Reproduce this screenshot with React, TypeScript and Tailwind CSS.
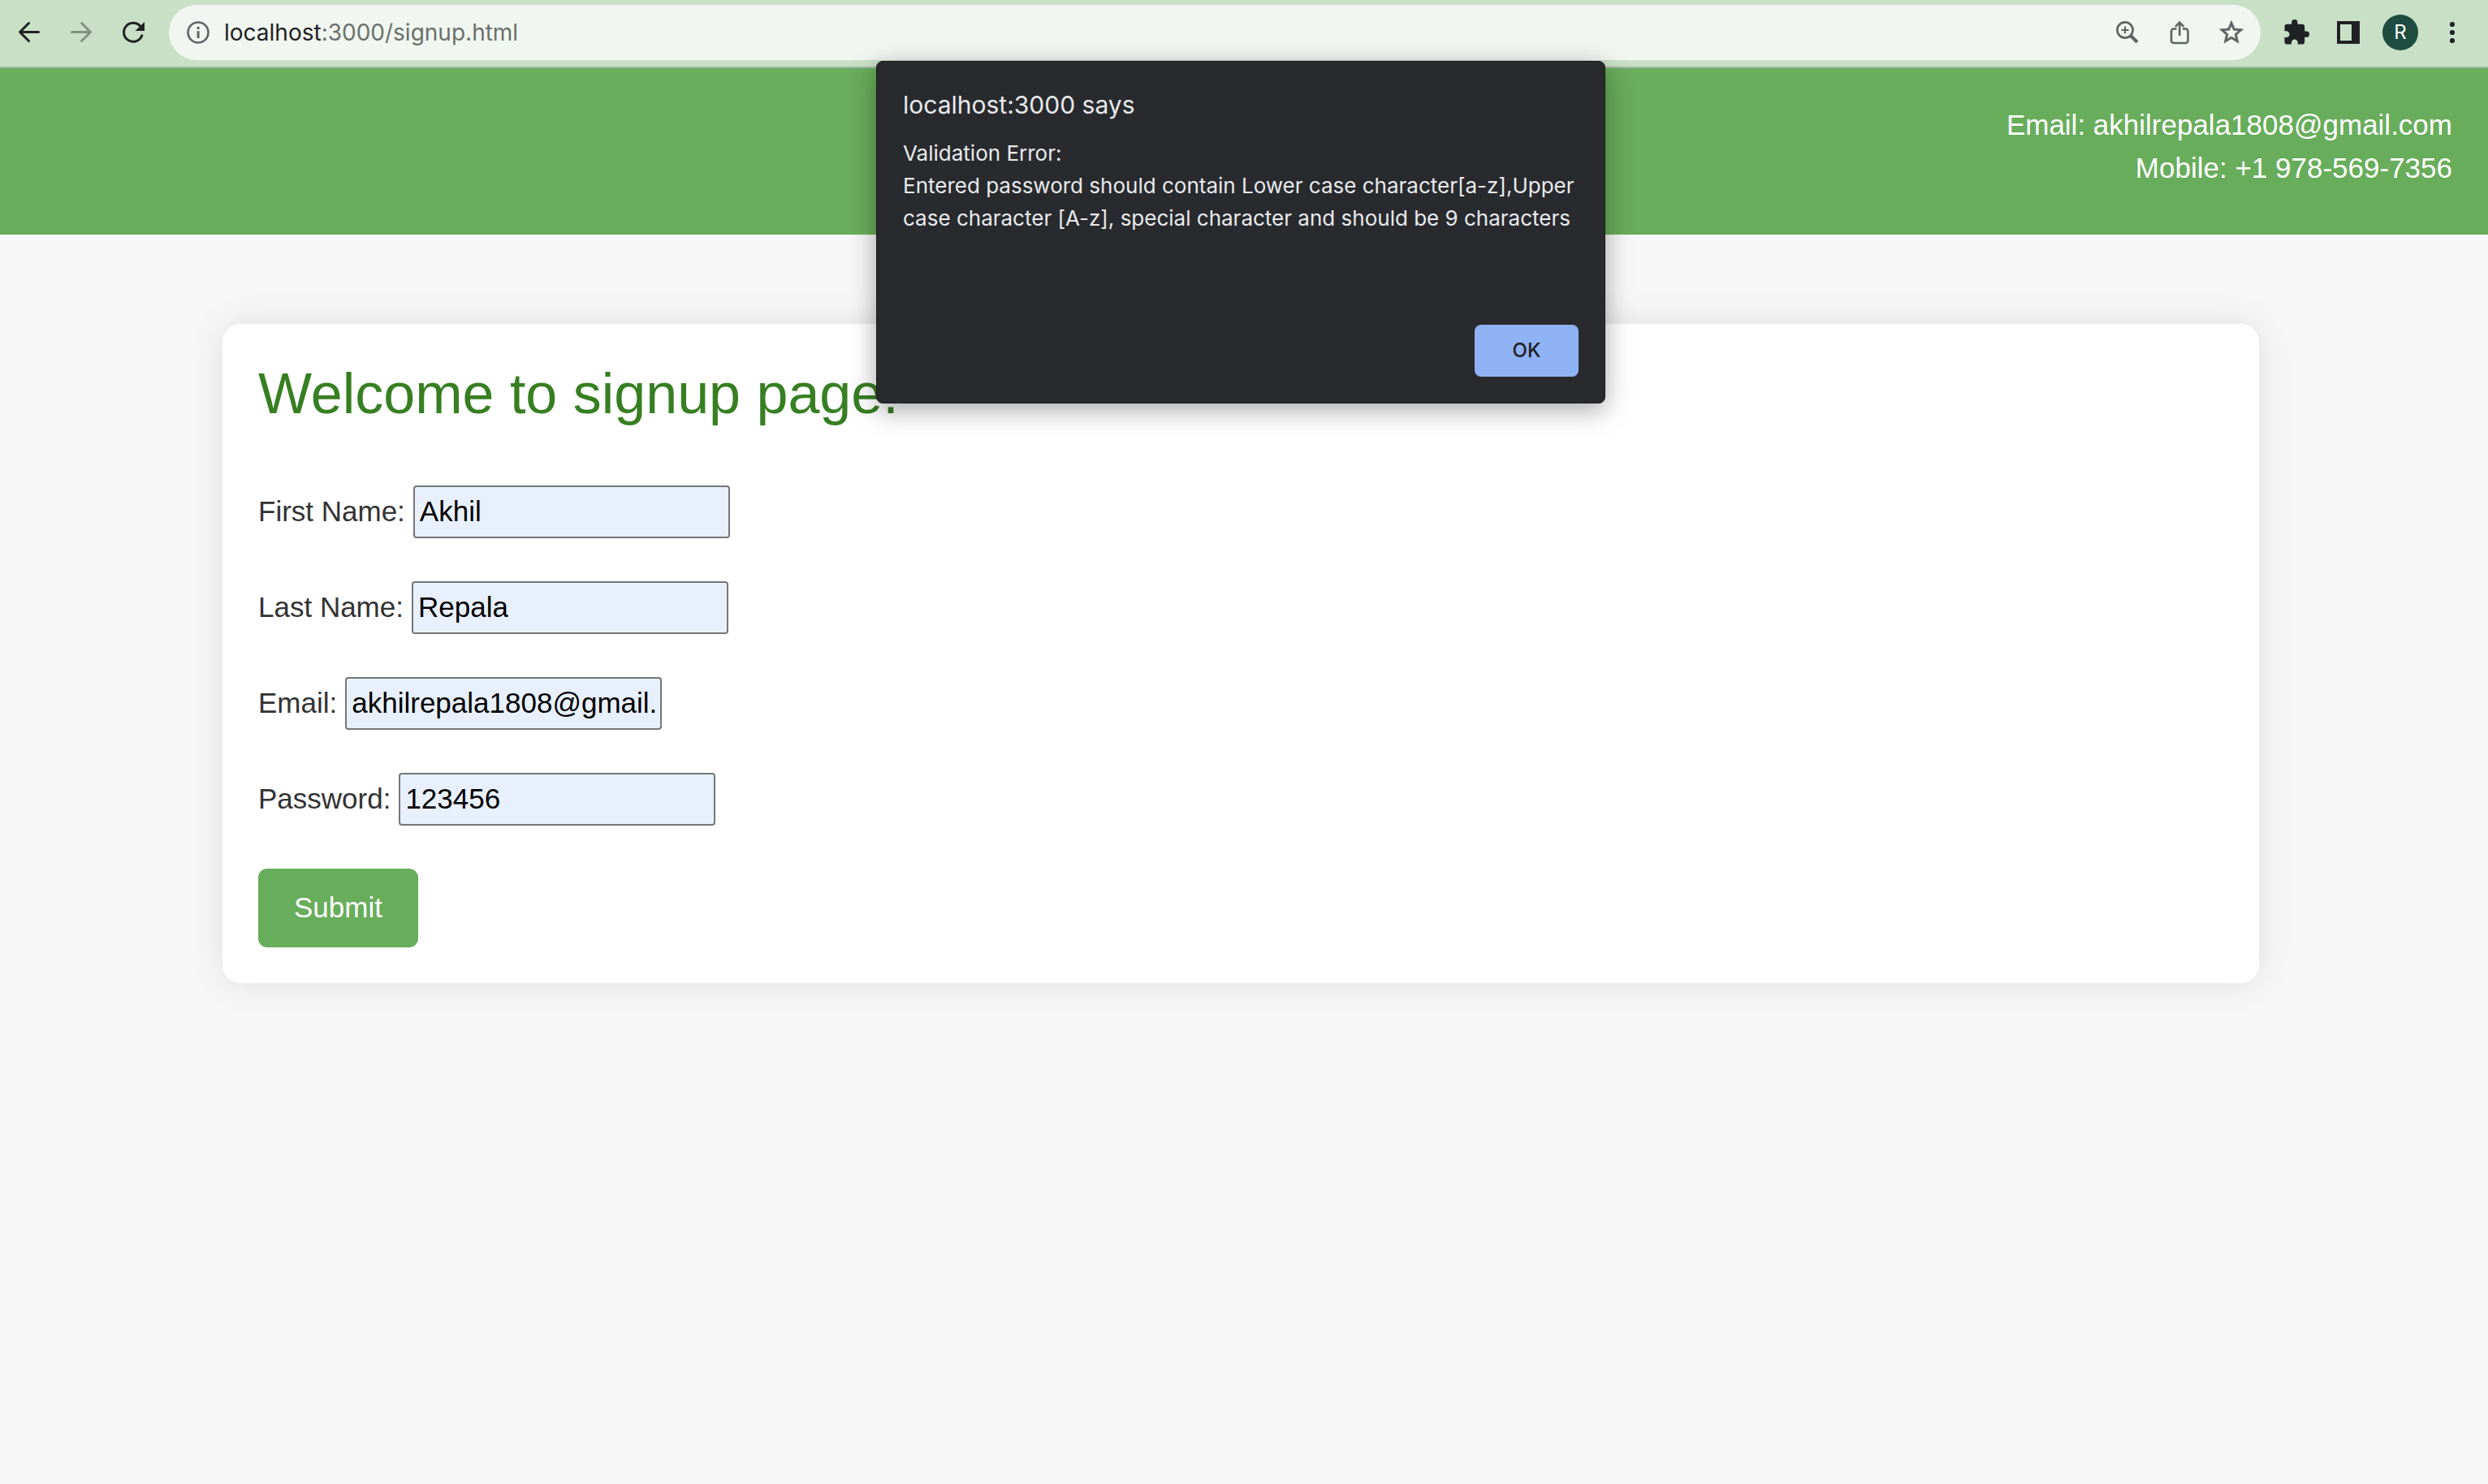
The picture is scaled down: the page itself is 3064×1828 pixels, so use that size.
import React from "react";

const ARIAL = "font-['Liberation_Sans',Arial,sans-serif]";

type FieldProps = { id: string; label: string; type: string; value: string };

function Field({ id, label, type, value }: FieldProps) {
  return (
    <div className="flex h-[65px] items-center gap-[10px]">
      <label htmlFor={id} className="pb-[2px]">{label}</label>
      <input
        id={id}
        type={type}
        defaultValue={value}
        className="h-[65px] w-[390px] rounded-[4px] border-2 border-[#767676] bg-[#e8f0fe] px-[6px] pb-[2px] text-black"
      />
    </div>
  );
}

function IconButton({ label, className, children }: { label: string; className: string; children: React.ReactNode }) {
  return (
    <button type="button" aria-label={label} className={`flex h-16 w-16 items-center justify-center ${className}`}>
      {children}
    </button>
  );
}

function Toolbar() {
  return (
    <div className="flex h-[84px] items-start border-b-2 border-[#a3b9a5] bg-[#c9e0c6] pt-[6px] font-[Inter,sans-serif]">
      <div className="flex h-[68px] w-[208px] shrink-0 items-center pl-1">
        <IconButton label="Back" className="text-[#202124]">
          <svg viewBox="0 0 32 32" className="h-8 w-8" fill="none" stroke="currentColor" strokeWidth="3" strokeLinecap="round" strokeLinejoin="round">
            <path d="M27.5 15.5H4.8M15.5 4.500L4.500 15.500l11 11" />
          </svg>
        </IconButton>
        <IconButton label="Forward" className="text-[#82917f]">
          <svg viewBox="0 0 32 32" className="h-8 w-8" fill="none" stroke="currentColor" strokeWidth="3" strokeLinecap="round" strokeLinejoin="round">
            <path d="M4.500 15.500h22.700M16.500 4.500l11 11-11 11" />
          </svg>
        </IconButton>
        <IconButton label="Reload" className="text-[#202124]">
          <svg viewBox="0 0 32 32" className="h-8 w-8">
            <path d="M26.800 19.800A11.500 11.500 0 1 1 24.500 8" fill="none" stroke="currentColor" strokeWidth="3" strokeLinecap="round" />
            <path d="M30 3v11H18.500z" fill="currentColor" />
          </svg>
        </IconButton>
      </div>
      <div className="flex h-[68px] grow items-center rounded-full bg-[#f1f7f0] pr-1">
        <svg viewBox="0 0 28 28" className="ml-[22px] mr-[18px] h-7 w-7 shrink-0 text-[#5f6368]">
          <circle cx="14" cy="14" r="12.5" fill="none" stroke="currentColor" strokeWidth="2.6" />
          <path d="M12.6 7h3v3h-3zM12.6 12.2h3V21h-3z" fill="currentColor" />
        </svg>
        <div className="grow text-[28px] leading-[34px] text-[#6a706c]">
          <span className="text-[#202124]">localhost</span>:3000/signup.html
        </div>
        <IconButton label="Zoom" className="text-[#5f6363]">
          <svg viewBox="0 0 32 32" className="h-8 w-8" fill="none" stroke="currentColor">
            <circle cx="13" cy="13" r="9.6" strokeWidth="2.6" />
            <path d="M13 8.500v9M8.500 13h9" strokeWidth="2" />
            <path d="M20 20l8 8" strokeWidth="4" />
          </svg>
        </IconButton>
        <IconButton label="Share" className="text-[#5f6363]">
          <svg viewBox="0 0 32 32" className="h-8 w-8" fill="none" stroke="currentColor" strokeWidth="2.6">
            <path d="M12.500 11.500H9a3 3 0 0 0-3 3V26a3 3 0 0 0 3 3h14.500a3 3 0 0 0 3-3V14.500a3 3 0 0 0-3-3H20M16.200 20V4M11 8.800l5.200-5.200 5.200 5.200" />
          </svg>
        </IconButton>
        <IconButton label="Bookmark" className="text-[#5f6363]">
          <svg viewBox="1 1 22 22" className="h-8 w-8" fill="currentColor" stroke="currentColor" strokeWidth="0.5">
            <path d="M22 9.240l-7.190-.620L12 2 9.190 8.630 2 9.240l5.460 4.730L5.820 21 12 17.270 18.180 21l-1.630-7.030L22 9.240zM12 15.400l-3.760 2.270 1-4.280-3.320-2.880 4.380-.380L12 6.100l1.710 4.040 4.380.380-3.320 2.880 1 4.280L12 15.400z" />
          </svg>
        </IconButton>
      </div>
      <div className="flex h-[68px] shrink-0 items-center pl-3 pr-3">
        <IconButton label="Extensions" className="text-[#202124]">
          <svg viewBox="1 1 22 22" className="h-8 w-8" fill="currentColor">
            <path d="M20.500 11H19V7c0-1.100-.900-2-2-2h-4V3.500a2.500 2.500 0 0 0-5 0V5H4c-1.100 0-1.990.900-1.990 2v3.800H3.500c1.490 0 2.700 1.210 2.700 2.700s-1.210 2.700-2.700 2.700H2V20c0 1.100.900 2 2 2h3.800v-1.500c0-1.490 1.210-2.700 2.700-2.700s2.700 1.210 2.700 2.700V22H17c1.100 0 2-.900 2-2v-4h1.500a2.500 2.500 0 0 0 0-5z" />
          </svg>
        </IconButton>
        <IconButton label="Side panel" className="text-[#202124]">
          <svg viewBox="0 0 28 28" className="h-7 w-7" fill="currentColor" fillRule="evenodd">
            <path d="M0 0h28v28H0zM4 4v20h14V4z" />
          </svg>
        </IconButton>
        <IconButton label="Profile" className="">
          <span className="flex h-11 w-11 items-center justify-center rounded-full bg-[#1e4d40] text-2xl text-white">R</span>
        </IconButton>
        <IconButton label="Menu" className="text-[#202124]">
          <svg viewBox="0 0 32 32" className="h-8 w-8" fill="currentColor">
            <circle cx="16" cy="6" r="3.1" />
            <circle cx="16" cy="16" r="3.1" />
            <circle cx="16" cy="26" r="3.1" />
          </svg>
        </IconButton>
      </div>
    </div>
  );
}

function AlertDialog() {
  return (
    <div
      role="alertdialog"
      aria-labelledby="alert-title"
      aria-describedby="alert-text"
      className="absolute inset-x-0 top-[75px] mx-auto flex h-[422px] w-[898px] flex-col rounded-[8px] border border-[#1b1c1e] bg-[#292a2d] px-8 pb-8 pt-[33px] font-[Inter,sans-serif] text-[#e8eaed] shadow-[0_8px_32px_rgba(0,0,0,0.35)]"
    >
      <h2 id="alert-title" className="text-[30px] leading-[40px]">localhost:3000 says</h2>
      <p id="alert-text" className="mt-[20px] whitespace-nowrap text-[26px] leading-[40px]">
        Validation Error:
        <br />
        Entered password should contain Lower case character[a-z],Upper
        <br />
        case character [A-z], special character and should be 9 characters
      </p>
      <button
        type="button"
        className="mt-auto h-16 w-32 self-end rounded-[8px] bg-[#8fb2f4] text-[24px] font-medium text-[#202124]"
      >
        OK
      </button>
    </div>
  );
}

export default function App() {
  return (
    <div className="min-h-screen bg-[#f7f7f7]">
      <Toolbar />
      <div className={`text-[35px] leading-[53px] text-[#333333] ${ARIAL}`}>
        <header className="bg-[#68ad5b] px-11 pb-14 pt-[43px] text-right text-white">
          <p>Email: akhilrepala1808@gmail.com</p>
          <p>Mobile: +1 978-569-7356</p>
        </header>
        <div className="pr-2 pt-[110px]">
          <main className="mx-auto w-full max-w-[2508px] rounded-[22px] bg-white p-11 shadow-[0_0_44px_rgba(0,0,0,0.1)]">
            <h1 className="text-[70px] leading-[84px] text-[#377f22]">Welcome to signup page.</h1>
            <form className="mt-[71px] flex flex-col items-start gap-[53px]">
              <Field id="first" label="First Name:" type="text" value="Akhil" />
              <Field id="last" label="Last Name:" type="text" value="Repala" />
              <Field id="email" label="Email:" type="text" value="akhilrepala1808@gmail.com" />
              <Field id="password" label="Password:" type="text" value="123456" />
              <button type="button" className="rounded-[11px] bg-[#68ad5b] px-11 pb-[23px] pt-[21px] text-white">
                Submit
              </button>
            </form>
          </main>
        </div>
      </div>
      <div className="absolute inset-x-0 top-0 pr-2">
        <div className="relative">
          <AlertDialog />
        </div>
      </div>
    </div>
  );
}
